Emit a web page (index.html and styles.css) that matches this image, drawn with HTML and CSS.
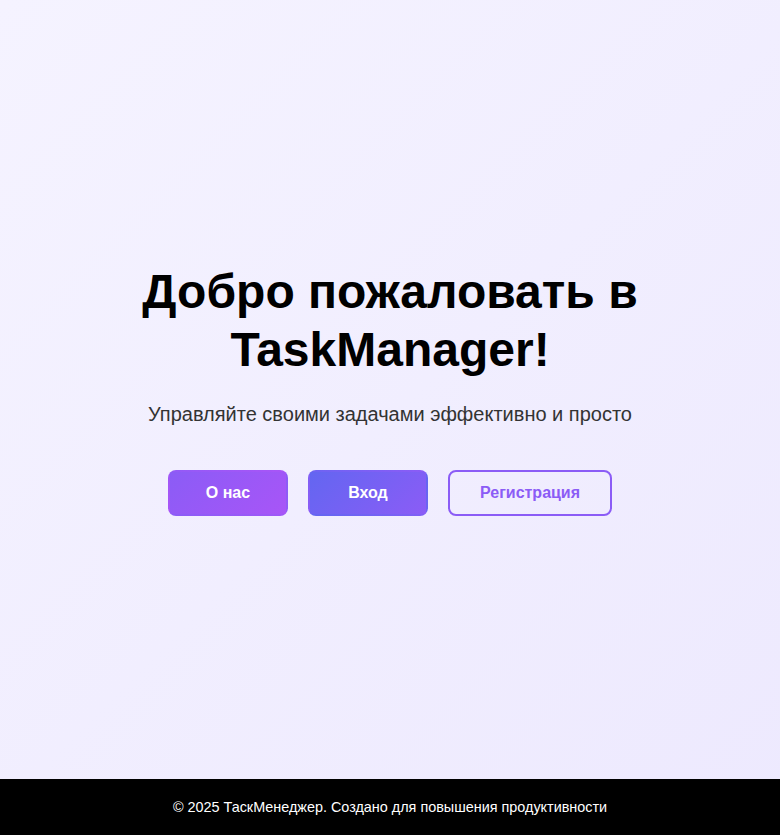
FILE: index.html
```html
<!DOCTYPE html>
<html lang="ru">
<head>
<meta charset="utf-8">
<title>TaskManager</title>
<link rel="stylesheet" href="styles.css">
</head>
<body>
<div class="page">
  <main class="hero">
    <div class="hero-inner">
      <h1 class="title">Добро пожаловать в TaskManager!</h1>
      <p class="subtitle">Управляйте своими задачами эффективно и просто</p>
      <div class="actions">
        <a class="btn btn-about" href="#">О нас</a>
        <a class="btn btn-login" href="#">Вход</a>
        <a class="btn btn-outline" href="#">Регистрация</a>
      </div>
    </div>
  </main>
  <footer class="footer">© 2025 ТаскМенеджер. Создано для повышения продуктивности</footer>
</div>
</body>
</html>
```
FILE: styles.css
```css
* { box-sizing: border-box; }
html, body { margin: 0; padding: 0; }
body {
  font-family: "Liberation Sans", Arial, sans-serif;
  background: linear-gradient(135deg, #f5f3ff 0%, #ede9fe 100%);
  min-height: 100vh;
}
.page {
  min-height: 100vh;
  display: flex;
  flex-direction: column;
}
.hero {
  flex: 1;
  display: flex;
  align-items: center;
  justify-content: center;
}
.hero-inner {
  max-width: 600px;
  text-align: center;
}
.title {
  margin: 0 0 25px;
  font-size: 48px;
  line-height: 1.2;
  font-weight: 700;
  color: #000;
}
.subtitle {
  margin: 0 0 44px;
  font-size: 20px;
  line-height: 23px;
  color: #333;
}
.actions {
  display: flex;
  justify-content: center;
  gap: 20px;
}
.btn {
  display: inline-block;
  min-width: 120px;
  padding: 12px 30px;
  border: 2px solid transparent;
  border-radius: 8px;
  font-size: 16px;
  line-height: 18px;
  font-weight: 700;
  text-decoration: none;
  color: #fff;
}
.btn-about { background: linear-gradient(135deg, #8b5cf6, #a855f7); }
.btn-login { background: linear-gradient(135deg, #6366f1, #8b5cf6); }
.btn-outline {
  padding: 12px 30px;
  border-color: #8b5cf6;
  color: #8b5cf6;
  background: transparent;
}
.footer {
  height: 56px;
  background: #000;
  color: #fff;
  font-size: 14.4px;
  display: flex;
  align-items: center;
  justify-content: center;
}
```
